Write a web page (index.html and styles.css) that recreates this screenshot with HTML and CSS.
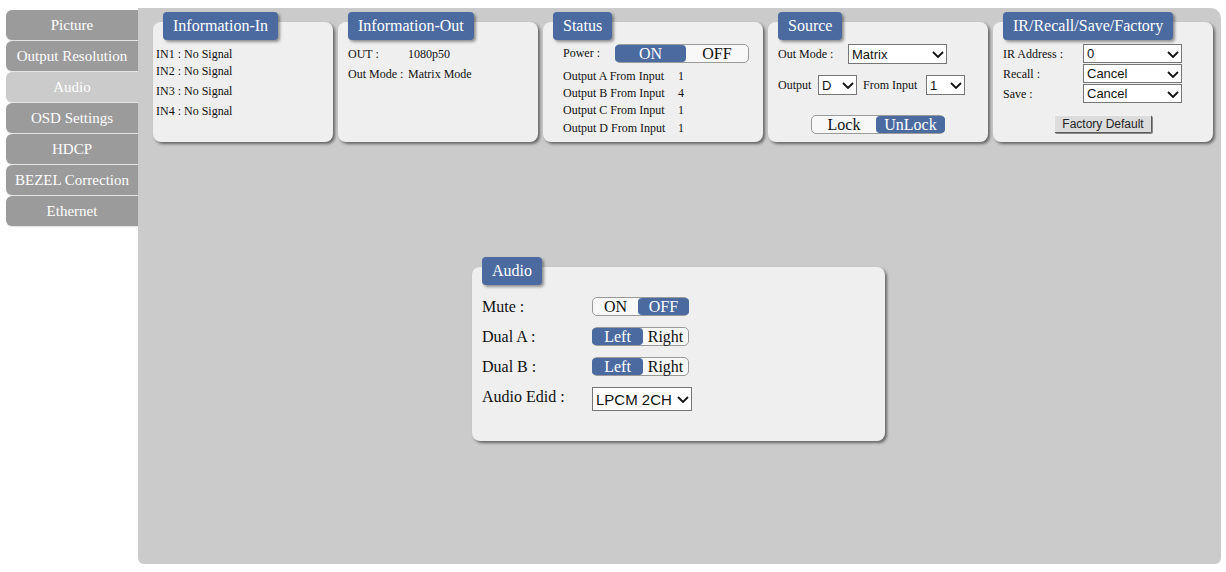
FILE: index.html
```html
<!DOCTYPE html>
<html>
<head>
<meta charset="utf-8">
<link rel="stylesheet" href="styles.css">
</head>
<body>
<div class="page">
  <nav class="sidebar">
    <div class="tab">Picture</div>
    <div class="tab">Output Resolution</div>
    <div class="tab active">Audio</div>
    <div class="tab">OSD Settings</div>
    <div class="tab">HDCP</div>
    <div class="tab">BEZEL Correction</div>
    <div class="tab">Ethernet</div>
  </nav>
  <main class="main">
    <div class="cards">
      <section class="card w180">
        <div class="title">Information-In</div>
        <div class="in-list">
          <div class="in-row">IN1 : No Signal</div>
          <div class="in-row">IN2 : No Signal</div>
          <div class="in-row gap">IN3 : No Signal</div>
          <div class="in-row gap">IN4 : No Signal</div>
        </div>
      </section>
      <section class="card w200">
        <div class="title">Information-Out</div>
        <div class="out-list">
          <div class="kv"><span class="k">OUT :</span><span>1080p50</span></div>
          <div class="kv"><span class="k">Out Mode :</span><span>Matrix Mode</span></div>
        </div>
      </section>
      <section class="card w220">
        <div class="title">Status</div>
        <div class="status">
          <div class="power-row">
            <span class="plabel">Power :</span>
            <div class="toggle t-power big"><span class="seg on">ON</span><span class="seg">OFF</span></div>
          </div>
          <div class="outs">
            <div class="orow"><span class="olabel">Output A From Input</span><span>1</span></div>
            <div class="orow"><span class="olabel">Output B From Input</span><span>4</span></div>
            <div class="orow"><span class="olabel">Output C From Input</span><span>1</span></div>
            <div class="orow"><span class="olabel">Output D From Input</span><span>1</span></div>
          </div>
        </div>
      </section>
      <section class="card w220">
        <div class="title">Source</div>
        <div class="src">
          <div class="src-row1">
            <span class="slabel">Out Mode :</span>
            <span class="sel s99"><select><option>Matrix</option></select><svg class="chev" viewBox="0 0 12 7"><path d="M1 1 L6 6 L11 1" fill="none" stroke="#111" stroke-width="1.8"/></svg></span>
          </div>
          <div class="src-row2">
            <span class="olab">Output</span>
            <span class="sel s39"><select><option>D</option></select><svg class="chev" viewBox="0 0 12 7"><path d="M1 1 L6 6 L11 1" fill="none" stroke="#111" stroke-width="1.8"/></svg></span>
            <span class="flab">From Input</span>
            <span class="sel s39"><select><option>1</option></select><svg class="chev" viewBox="0 0 12 7"><path d="M1 1 L6 6 L11 1" fill="none" stroke="#111" stroke-width="1.8"/></svg></span>
          </div>
          <div class="toggle t-lock big"><span class="seg">Lock</span><span class="seg on">UnLock</span></div>
        </div>
      </section>
      <section class="card w220">
        <div class="title">IR/Recall/Save/Factory</div>
        <div class="ir">
          <div class="ir-row">
            <span class="irlabel">IR Address :</span>
            <span class="sel s99 h19"><select><option>0</option></select><svg class="chev" viewBox="0 0 12 7"><path d="M1 1 L6 6 L11 1" fill="none" stroke="#111" stroke-width="1.8"/></svg></span>
          </div>
          <div class="ir-row">
            <span class="irlabel">Recall :</span>
            <span class="sel s99 h19"><select><option>Cancel</option></select><svg class="chev" viewBox="0 0 12 7"><path d="M1 1 L6 6 L11 1" fill="none" stroke="#111" stroke-width="1.8"/></svg></span>
          </div>
          <div class="ir-row">
            <span class="irlabel">Save :</span>
            <span class="sel s99 h19"><select><option>Cancel</option></select><svg class="chev" viewBox="0 0 12 7"><path d="M1 1 L6 6 L11 1" fill="none" stroke="#111" stroke-width="1.8"/></svg></span>
          </div>
          <button class="factory">Factory Default</button>
        </div>
      </section>
    </div>

    <section class="card audio">
      <div class="title">Audio</div>
      <div class="audio-body">
        <div class="arow">
          <span class="alabel">Mute :</span>
          <div class="toggle t-audio"><span class="seg s46">ON</span><span class="seg s51 on">OFF</span></div>
        </div>
        <div class="arow">
          <span class="alabel">Dual A :</span>
          <div class="toggle t-audio"><span class="seg s51 on">Left</span><span class="seg s46">Right</span></div>
        </div>
        <div class="arow">
          <span class="alabel">Dual B :</span>
          <div class="toggle t-audio"><span class="seg s51 on">Left</span><span class="seg s46">Right</span></div>
        </div>
        <div class="arow">
          <span class="alabel">Audio Edid :</span>
          <span class="sel edid"><select><option>LPCM 2CH</option></select><svg class="chev" viewBox="0 0 12 7"><path d="M1 1 L6 6 L11 1" fill="none" stroke="#111" stroke-width="1.8"/></svg></span>
        </div>
      </div>
    </section>
  </main>
</div>
</body>
</html>
```

FILE: styles.css
```css
html, body {
  margin: 0;
  background: #ffffff;
  font-family: "Liberation Serif", "Times New Roman", serif;
  color: #111;
}

.page {
  display: flex;
  align-items: flex-start;
  padding: 8px 0 0 6px;
}

.sidebar {
  width: 132px;
  margin-top: 2px;
  display: flex;
  flex-direction: column;
  gap: 1px;
}

.tab {
  height: 30px;
  line-height: 30px;
  text-align: center;
  color: #ffffff;
  background: #9b9b9b;
  border-radius: 6px 0 0 6px;
  font-size: 15px;
  box-shadow: 0 1px 1px rgba(0, 0, 0, 0.12);
}

.tab.active {
  background: #cbcbcb;
}

.main {
  width: 1083px;
  height: 556px;
  box-sizing: border-box;
  background: #cbcbcb;
  border-radius: 0 10px 6px 6px;
  padding: 14px 0 0 15px;
  display: flow-root;
}

.cards {
  display: flex;
  gap: 5px;
  height: 120px;
}

.card {
  background: #efefef;
  border-radius: 8px;
  box-shadow: 2px 2px 3px rgba(0, 0, 0, 0.5);
  font-size: 12px;
  box-sizing: border-box;
}

.w180 { width: 180px; }
.w200 { width: 200px; }
.w220 { width: 220px; }

.title {
  width: fit-content;
  height: 28px;
  line-height: 28px;
  margin: -10px 0 0 10px;
  padding: 0 10px;
  background: #4a6aa0;
  color: #ffffff;
  font-size: 16px;
  border-radius: 4px;
  box-shadow: 2px 2px 3px rgba(0, 0, 0, 0.4);
}

/* Information-In */
.in-list {
  padding: 5.5px 0 0 3px;
}
.in-row {
  line-height: 17px;
  white-space: nowrap;
}
.in-row.gap {
  margin-top: 3px;
}

/* Information-Out */
.out-list {
  padding: 4px 0 0 10px;
}
.kv {
  display: flex;
  line-height: 20px;
}
.kv .k {
  width: 60px;
}

/* Status */
.status {
  padding: 4px 0 0 20px;
}
.power-row {
  display: flex;
  align-items: center;
  height: 19px;
}
.plabel {
  width: 52px;
}
.outs {
  margin-top: 4.5px;
}
.orow {
  display: flex;
  line-height: 17.4px;
}
.olabel {
  width: 115px;
}

/* toggles */
.toggle {
  display: flex;
  height: 19px;
  box-sizing: border-box;
  border: 1px solid #9a9a9a;
  border-radius: 5px;
  background: #f8f8f8;
  font-size: 16px;
}
.seg {
  display: block;
  height: 17px;
  line-height: 17px;
  text-align: center;
  color: #111;
  border-radius: 4px;
}
.seg.on {
  background: #4a6aa0;
  color: #ffffff;
}
.t-power { width: 134px; }
.t-power .seg:first-child { width: 71px; margin-left: -1px; }
.t-power .seg:last-child { flex: 1; }

.t-lock { width: 134px; margin: 20px auto 0; }
.t-lock .seg:first-child { width: 64px; }
.t-lock .seg:last-child { flex: 1; margin-right: -1px; }

.t-audio { width: 97px; }
.t-audio .s46 { width: 45px; }
.t-audio .s51 { width: 51px; }
.t-audio .seg.on:first-child { margin-left: -1px; }
.t-audio .seg.on:last-child { margin-right: -1px; }

/* selects */
.sel {
  position: relative;
  display: inline-block;
  height: 20px;
}
.sel select {
  appearance: none;
  -webkit-appearance: none;
  width: 100%;
  height: 100%;
  box-sizing: border-box;
  margin: 0;
  border: 1px solid #767676;
  border-radius: 0;
  background: #ffffff;
  font-family: "Liberation Sans", Arial, sans-serif;
  font-size: 13px;
  color: #111;
  padding: 0 0 0 3px;
  outline: none;
}
.sel .chev {
  position: absolute;
  right: 3px;
  top: 50%;
  width: 12px;
  height: 7px;
  margin-top: -3px;
  pointer-events: none;
}
.s99 { width: 99px; }
.s39 { width: 39px; }
.h19 { height: 19px; }

/* Source */
.src {
  padding: 4px 10px 0 10px;
}
.src-row1 {
  display: flex;
  align-items: center;
  height: 20px;
}
.slabel {
  width: 70px;
}
.src-row2 {
  display: flex;
  align-items: center;
  height: 20px;
  margin-top: 11px;
}
.olab {
  width: 40px;
}
.flab {
  width: 69px;
  padding-left: 6px;
  box-sizing: border-box;
}

/* IR */
.ir {
  padding: 4px 0 0 10px;
}
.ir-row {
  display: flex;
  align-items: flex-start;
  height: 20px;
}
.irlabel {
  width: 80px;
  line-height: 20px;
}
.factory {
  display: block;
  width: 98px;
  height: 18px;
  margin: 11px 0 0 51px;
  padding: 0;
  font-family: "Liberation Sans", Arial, sans-serif;
  font-size: 12px;
  color: #222;
  background: #dcdcdc;
  border: 1px solid;
  border-color: #f2f2f2 #5a5a5a #5a5a5a #f2f2f2;
  border-radius: 2px;
  box-shadow: 1px 1px 0 #8a8a8a;
}

/* Audio card */
.audio {
  display: flow-root;
  width: 413px;
  height: 174px;
  margin: 125px 0 0 319px;
}
.audio-body {
  padding: 12px 0 0 10px;
  display: flex;
  flex-direction: column;
  gap: 10px;
}
.arow {
  display: flex;
  align-items: flex-start;
  min-height: 20px;
}
.alabel {
  width: 110px;
  font-size: 16px;
  line-height: 19px;
}
.sel.edid {
  width: 100px;
  height: 24px;
}
.sel.edid select {
  font-size: 15px;
  padding-left: 3px;
}
```
